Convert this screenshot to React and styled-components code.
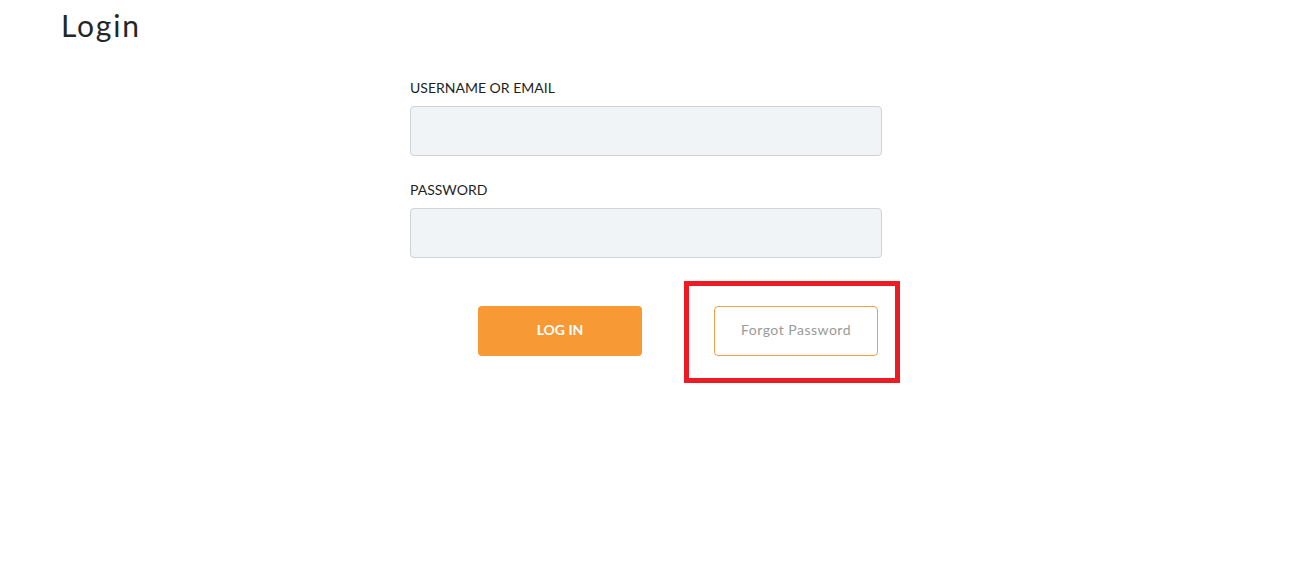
import React from "react";
import styled, { createGlobalStyle } from "styled-components";

const GlobalStyle = createGlobalStyle`
  html, body { margin: 0; padding: 0; background: #ffffff; }
  body { font-family: Lato, "Noto Sans", "Liberation Sans", sans-serif; }
  * { box-sizing: border-box; }
`;

const Page = styled.div`
  width: 1292px;
  min-height: 564px;
  background: #ffffff;
`;

const Title = styled.h1`
  margin: 0;
  padding: 7px 0 0 61px;
  font-size: 30px;
  line-height: 36px;
  font-weight: 400;
  letter-spacing: 1.8px;
  color: #232629;
`;

const Form = styled.form`
  width: 472px;
  margin: 36px auto 0;
  display: flex;
  flex-direction: column;
`;

const Field = styled.div`
  display: flex;
  flex-direction: column;
  margin-bottom: ${(p) => p.$mb || 0}px;
`;

const Label = styled.label`
  font-size: 14px;
  line-height: 17px;
  color: #1d1f22;
  margin-bottom: 10px;
`;

const Input = styled.input`
  width: 100%;
  height: 50px;
  background: #f1f4f7;
  border: 1px solid #cfd3d7;
  border-radius: 4px;
  padding: 0 14px;
  font-size: 14px;
  outline: none;
`;

const Actions = styled.div`
  display: flex;
  margin-top: 48px;
  padding-left: 68px;
  gap: 72px;
`;

const BaseButton = styled.button`
  width: 164px;
  height: 50px;
  border-radius: 4px;
  font-family: Lato, "Noto Sans", "Liberation Sans", sans-serif;
  font-size: 14px;
  cursor: pointer;
  padding: 0 0 3px;
`;

const PrimaryButton = styled(BaseButton)`
  background: #f79a36;
  border: none;
  color: #ffffff;
  font-weight: 700;
`;

const OutlineButton = styled(BaseButton)`
  background: #ffffff;
  border: 1px solid #f5a04a;
  color: #9a9a9a;
  font-weight: 400;
  letter-spacing: 0.5px;
`;

const Highlight = styled.div`
  position: relative;
`;

const HighlightFrame = styled.span`
  position: absolute;
  top: -25px;
  left: -30px;
  right: -22px;
  bottom: -27px;
  border: 5px solid #ed1c24;
  pointer-events: none;
`;

export default function App() {
  return (
    <Page>
      <GlobalStyle />
      <Title>Login</Title>
      <Form onSubmit={(e) => e.preventDefault()}>
        <Field $mb={25}>
          <Label>USERNAME OR EMAIL</Label>
          <Input type="text" />
        </Field>
        <Field>
          <Label>PASSWORD</Label>
          <Input type="password" />
        </Field>
        <Actions>
          <PrimaryButton type="submit">LOG IN</PrimaryButton>
          <Highlight>
            <OutlineButton type="button">Forgot Password</OutlineButton>
            <HighlightFrame />
          </Highlight>
        </Actions>
      </Form>
    </Page>
  );
}
